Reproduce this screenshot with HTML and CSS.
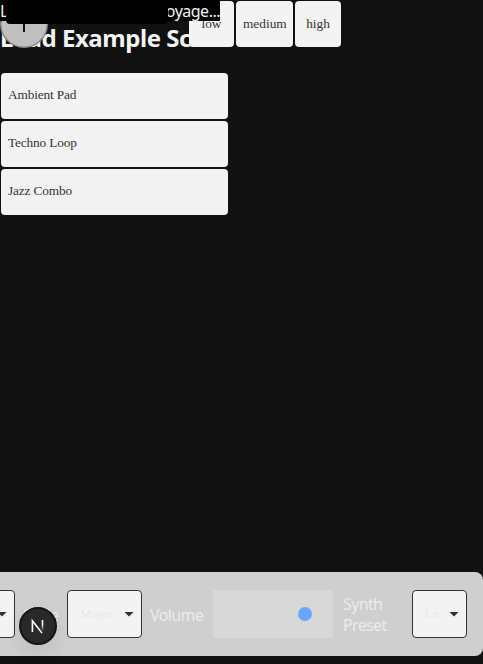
FILE: index.html
```html
<!DOCTYPE html>
<html lang="en">
<head>
<meta charset="utf-8">
<title>Load Example Scenes</title>
<link rel="stylesheet" href="styles.css">
</head>
<body>
<main>
  <h2 class="title">Load Example Sc</h2>
  <div class="scenes">
    <button>Ambient Pad</button>
    <button>Techno Loop</button>
    <button>Jazz Combo</button>
  </div>
</main>
<svg class="knob" viewBox="0 0 48 48"><circle cx="24" cy="24" r="23.3" fill="#c0c0c0" stroke="#858585" stroke-width="1.4"/><path d="M24 8v24" stroke="#111" stroke-width="2"/></svg>
<div class="quality"><button>low</button><button>medium</button><button>high</button></div>
<div class="status"><span>L</span><span>oyage...</span></div>
<div class="shade"></div>
<footer class="controls">
  <div class="select key"><i class="caret"></i></div>
  <label class="scale-label">Scale</label>
  <div class="select scale"><span>Major</span><i class="caret"></i></div>
  <label class="volume-label">Volume</label>
  <div class="slider"><i class="thumb"></i></div>
  <label class="synth-label">Synth<br>Preset</label>
  <div class="select synth"><span>Le</span><i class="caret"></i></div>
</footer>
<div class="badge"><svg viewBox="0 0 38 38"><defs><linearGradient id="fade" x1="0" y1="0" x2="0" y2="1"><stop offset=".4" stop-color="#fff"/><stop offset="1" stop-color="#fff" stop-opacity="0"/></linearGradient></defs><circle cx="19" cy="19" r="18" fill="#292929" stroke="#151515" stroke-width="2"/><path d="M13.4 25V13.8L23 26" fill="none" stroke="#fff" stroke-width="1.6"/><rect x="22.7" y="13" width="1.6" height="11" fill="url(#fade)"/></svg></div>
</body>
</html>
```
FILE: styles.css
```css
* { box-sizing: border-box; }
body {
  margin: 0;
  height: 664px;
  overflow: hidden;
  position: relative;
  display: flex;
  flex-direction: column;
  justify-content: space-between;
  background: #111;
  color: #f3f3f3;
  font: 16px "Noto Sans", sans-serif;
}
main { padding-top: 20px; }
.title {
  margin: 0;
  height: 36px;
  font-size: 24px;
  line-height: 35px;
  white-space: nowrap;
  letter-spacing: -0.45px;
}
.scenes {
  display: flex;
  flex-direction: column;
  gap: 2px;
  width: 227px;
  margin: 17px 0 0 1px;
}
button {
  height: 46px;
  padding: 0 7px 2px;
  border: 0;
  border-radius: 4px;
  background: #f3f3f3;
  color: #333;
  font: 13.333px "Liberation Serif", serif;
  text-align: left;
}
.scenes button { letter-spacing: -0.15px; }
.knob { position: absolute; left: 0; top: 0; width: 48px; height: 48px; }
.quality { position: absolute; left: 189px; top: 1px; display: flex; gap: 2px; }
.quality button { width: 46px; padding-bottom: 0; text-align: center; }
.quality button:nth-child(2) { width: 57px; }
.quality button:first-child { width: 45px; }
.status {
  position: absolute;
  left: 0;
  top: 0;
  width: 220px;
  height: 21px;
  display: flex;
  justify-content: space-between;
  background: #000;
  font-size: 16px;
  line-height: 23px;
  letter-spacing: -0.5px;
}
.shade {
  position: absolute;
  left: 6px;
  top: 0;
  width: 162px;
  height: 24px;
  border-radius: 0 0 4px 4px;
  background: #000;
}
.controls {
  display: flex;
  align-items: center;
  height: 84px;
  margin-bottom: 8px;
  border-radius: 0 8px 8px 0;
  background: #cfcfcf;
  color: #ebebeb;
  line-height: 21px;
  letter-spacing: -0.65px;
}
.controls label { padding-top: 2px; }
.select {
  display: flex;
  align-items: center;
  justify-content: space-between;
  flex: none;
  height: 48px;
  padding: 0 7px 0 12px;
  border: 1px solid #333;
  border-radius: 4px;
  background: #f3f3f3;
  color: #e8e8e8;
  font: 13.333px "Liberation Serif", serif;
  letter-spacing: 0;
}
.caret {
  width: 10px;
  height: 5px;
  background: #2c3333;
  clip-path: polygon(0 0, 100% 0, 50% 100%);
}
.key { width: 75px; margin-left: -60px; justify-content: flex-end; }
.scale-label { width: 36px; margin: 0 8px; }
.scale { width: 75px; }
.volume-label { width: 63px; margin-left: 8px; }
.slider {
  width: 120px;
  height: 48px;
  display: flex;
  align-items: center;
  padding-left: 85px;
  border-radius: 2px;
  background: #d8d8d8;
}
.thumb { width: 14px; height: 14px; border-radius: 50%; background: #66a6ff; }
.synth-label { width: 69px; margin-left: 10px; }
.synth { width: 55px; }
.badge {
  position: absolute;
  left: 19px;
  top: 607px;
  width: 38px;
  height: 38px;
  border-radius: 50%;
  box-shadow: 0 8px 20px rgba(0, 0, 0, .08);
}
.badge svg { display: block; }
```
